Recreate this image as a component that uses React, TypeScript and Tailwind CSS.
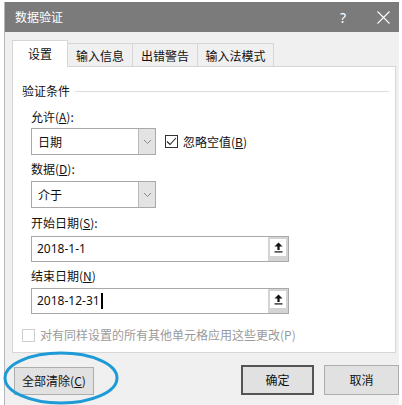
import React from "react";

const cjk = { fontFamily: '"Noto Sans CJK SC", "Noto Sans", sans-serif' };

function Chevron() {
  return (
    <svg width="9" height="6" viewBox="0 0 9 6">
      <path d="M1 1 L4.5 4.5 L8 1" fill="none" stroke="#8a8a8a" strokeWidth="1" />
    </svg>
  );
}

function Combo({ value }: { value: string }) {
  return (
    <div className="flex h-[27px] w-[125px] border border-[#a9a9a9] bg-white">
      <div className="flex flex-1 items-center pl-[6px] text-[12px] text-[#111]">{value}</div>
      <div className="flex w-[17px] items-center justify-center border-l border-[#b9b9b9] bg-[#e3e3e3]">
        <Chevron />
      </div>
    </div>
  );
}

function UpArrow() {
  return (
    <svg width="9" height="11" viewBox="0 0 9 11">
      <path d="M4.5 0.5 L8.5 4.5 L5.6 4.5 L5.6 8 L3.4 8 L3.4 4.5 L0.5 4.5 Z" fill="#111" />
      <rect x="0.5" y="9.3" width="8" height="1.2" fill="#111" />
    </svg>
  );
}

function RefInput({ value, cursor }: { value: string; cursor?: boolean }) {
  return (
    <div className="flex h-[26px] w-[258px] border border-[#a9a9a9] bg-white">
      <div
        className="flex flex-1 items-center pl-[5px] text-[12px] text-[#111]"
        style={{ fontFamily: '"Noto Sans", sans-serif' }}
      >
        {value}
        {cursor && <span className="ml-[1px] inline-block h-[16px] w-[2px] bg-black" />}
      </div>
      <div className="flex w-[20px] flex-col bg-[#d4d4d4] p-[2px] pb-[5px]">
        <div className="flex flex-1 items-center justify-center bg-white">
          <UpArrow />
        </div>
      </div>
    </div>
  );
}

function Label({ children }: { children: React.ReactNode }) {
  return <div className="h-[16px] text-[12px] leading-[16px] text-[#111]">{children}</div>;
}

export default function App() {
  return (
    <div className="relative h-[405px] w-[402px] overflow-hidden bg-white pl-[4px] pr-[3px] pt-[2px]" style={cjk}>
      <div className="flex h-full flex-col border-l border-[#b5b5b5] bg-[#f0f0f0]">
        {/* Title bar */}
        <div className="flex h-[30px] shrink-0 items-center bg-[#7b7b7b] text-white">
          <div className="ml-[10px] text-[12px] leading-[16px]">数据验证</div>
          <div className="ml-auto mr-[31px] text-[14px]" style={{ fontFamily: '"Noto Sans", sans-serif' }}>?</div>
          <svg width="13" height="13" viewBox="0 0 13 13" className="mr-[9px]">
            <path d="M0.5 0.5 L12.5 12.5 M12.5 0.5 L0.5 12.5" stroke="#fff" strokeWidth="1.1" />
          </svg>
        </div>

        {/* Body */}
        <div className="flex flex-1 flex-col pl-[7px] pr-[3px] pt-[9px]">
          {/* Tabs */}
          <div className="relative z-10 flex h-[26px] items-end text-[12px] text-[#111]">
            <div className="flex h-[27px] w-[56px] items-center justify-center border border-b-0 border-[#d6d6d6] bg-white">
              设置
            </div>
            <div className="flex h-[24px] w-[65px] items-center justify-center border-r border-t border-[#d6d6d6]">
              输入信息
            </div>
            <div className="flex h-[24px] w-[65px] items-center justify-center border-r border-t border-[#d6d6d6]">
              出错警告
            </div>
            <div className="flex h-[24px] w-[76px] items-center justify-center border-r border-t border-[#d6d6d6]">
              输入法模式
            </div>
          </div>

          {/* Panel */}
          <div className="-mt-[1px] flex h-[287px] flex-col border border-[#d6d6d6] bg-white pl-[9px] pr-[6px] pt-[16px]">
            <div className="flex items-center">
              <div className="text-[12px] leading-[16px] text-[#111]">验证条件</div>
              <div className="ml-[5px] h-px flex-1 bg-[#dcdcdc]" />
            </div>

            <div className="ml-[9px] flex flex-col">
              <div className="mt-[10px]">
                <Label>
                  允许(<span className="underline">A</span>):
                </Label>
              </div>
              <div className="mt-[3px] flex items-center">
                <Combo value="日期" />
                <div className="ml-[9px] flex h-[13px] w-[13px] items-center justify-center border border-[#333] bg-white">
                  <svg width="11" height="9" viewBox="0 0 11 9">
                    <path d="M1 4.5 L4 7.5 L10 1" fill="none" stroke="#222" strokeWidth="1.1" />
                  </svg>
                </div>
                <div className="ml-[5px] text-[12px] text-[#111]">
                  忽略空值(<span className="underline">B</span>)
                </div>
              </div>

              <div className="mt-[6px]">
                <Label>
                  数据(<span className="underline">D</span>):
                </Label>
              </div>
              <div className="mt-[4px]">
                <Combo value="介于" />
              </div>

              <div className="mt-[7px]">
                <Label>
                  开始日期(<span className="underline">S</span>):
                </Label>
              </div>
              <div className="mt-[5px]">
                <RefInput value="2018-1-1" />
              </div>

              <div className="mt-[6px]">
                <Label>
                  结束日期(<span className="underline">N</span>)
                </Label>
              </div>
              <div className="mt-[4px]">
                <RefInput value="2018-12-31" cursor />
              </div>
            </div>

            <div className="mt-[13px] flex items-center">
              <div className="h-[13px] w-[13px] border border-[#cfcfcf] bg-white" />
              <div className="ml-[5px] text-[12px] leading-[16px] text-[#9a9a9a]">
                对有同样设置的所有其他单元格应用这些更改(P)
              </div>
            </div>
          </div>

          {/* Buttons */}
          <div className="mt-[12px] flex items-start text-[12px] text-[#111]">
            <div className="mt-[2px] ml-[2px] flex h-[28px] w-[80px] items-center justify-center border border-[#adadad] bg-[#e1e1e1]">
              全部清除(<span className="underline">C</span>)
            </div>
            <div className="ml-auto flex h-[30px] w-[73px] items-center justify-center border-2 border-[#555] bg-[#e1e1e1]">
              确定
            </div>
            <div className="ml-[10px] -mr-[3px] flex h-[30px] w-[75px] items-center justify-center border border-[#adadad] bg-[#e1e1e1]">
              取消
            </div>
          </div>
        </div>
      </div>

      {/* Annotation ellipse */}
      <svg className="absolute left-0 top-0" width="402" height="405" viewBox="0 0 402 405">
        <ellipse cx="61" cy="378" rx="56" ry="25" fill="none" stroke="#1e9bd6" strokeWidth="3" />
      </svg>
    </div>
  );
}
